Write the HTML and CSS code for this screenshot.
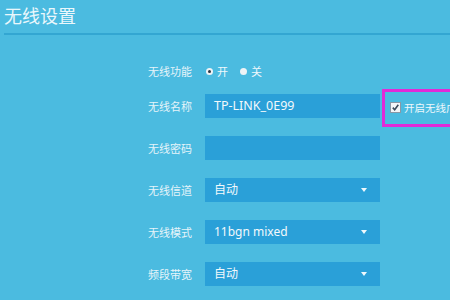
FILE: index.html
```html
<!DOCTYPE html>
<html lang="zh-CN">
<head>
  <meta charset="UTF-8">
  <title>无线设置</title>
  <link rel="stylesheet" href="styles.css">
</head>
<body>
  <div class="page">
    <h1 class="title">无线设置</h1>

    <div class="form">
      <div class="row row-radio">
        <span class="label">无线功能</span>
        <div class="radios">
          <span class="radio on"></span><span class="radio-text">开</span>
          <span class="radio"></span><span class="radio-text">关</span>
        </div>
      </div>

      <div class="row">
        <span class="label">无线名称</span>
        <div class="field">TP-LINK_0E99</div>
        <div class="highlight">
          <span class="checkbox">
            <svg width="9" height="9" viewBox="0 0 9 9"><path d="M1.8 4.6 L3.7 6.7 L7.3 1.8" fill="none" stroke="#3a4a5a" stroke-width="1.6"/></svg>
          </span>
          <span class="check-text">开启无线广播</span>
        </div>
      </div>

      <div class="row">
        <span class="label">无线密码</span>
        <div class="field"></div>
      </div>

      <div class="row">
        <span class="label">无线信道</span>
        <div class="field select">自动<span class="arrow"></span></div>
      </div>

      <div class="row">
        <span class="label">无线模式</span>
        <div class="field select">11bgn mixed<span class="arrow"></span></div>
      </div>

      <div class="row">
        <span class="label">频段带宽</span>
        <div class="field select">自动<span class="arrow"></span></div>
      </div>
    </div>
  </div>
</body>
</html>
```

FILE: styles.css
```css
body {
  margin: 0;
  background-color: #4bbbe0;
  font-family: "Noto Sans", "Noto Sans CJK SC", sans-serif;
  overflow: hidden;
}

.page {
  width: 450px;
  height: 300px;
  overflow: hidden;
}

.title {
  margin: 0 0 0 4px;
  padding-top: 5px;
  height: 35px;
  box-sizing: border-box;
  border-bottom: 2px solid #33a6d2;
  font-size: 18px;
  font-weight: normal;
  line-height: 22px;
  color: #eaf7fc;
}

.form {
  padding-top: 24px;
}

.row {
  display: flex;
  align-items: center;
  height: 24px;
  margin-bottom: 18px;
}

.row-radio {
  margin-bottom: 11px;
}

.label {
  flex-shrink: 0;
  width: 205px;
  padding-right: 13px;
  box-sizing: border-box;
  text-align: right;
  font-size: 11px;
  color: #e6f4fa;
}

.radios {
  display: flex;
  align-items: center;
  font-size: 11px;
  color: #eef8fc;
}

.radio {
  width: 7px;
  height: 7px;
  border-radius: 50%;
  background-color: #eef3f6;
  margin-left: 1px;
  margin-right: 4px;
  position: relative;
}

.radio.on::after {
  content: "";
  position: absolute;
  left: 2px;
  top: 2px;
  width: 3px;
  height: 3px;
  border-radius: 50%;
  background-color: #2b3440;
}

.radio-text {
  margin-right: 11px;
}

.field {
  flex-shrink: 0;
  width: 175px;
  height: 24px;
  box-sizing: border-box;
  background-color: #2aa0d8;
  color: #f2f9fc;
  font-size: 12.5px;
  line-height: 24px;
  padding-left: 9px;
  position: relative;
}

.select {
  font-size: 12px;
}

.arrow {
  position: absolute;
  right: 13px;
  top: 10px;
  width: 0;
  height: 0;
  border-left: 3.5px solid transparent;
  border-right: 3.5px solid transparent;
  border-top: 4px solid #eef8fc;
}

.highlight {
  display: flex;
  align-items: center;
  margin-left: 2px;
  margin-top: 3px;
  height: 38px;
  box-sizing: border-box;
  border: 3px solid #e22ad8;
  border-right: none;
  padding-left: 5px;
  padding-right: 10px;
  white-space: nowrap;
  flex-shrink: 0;
}

.checkbox {
  flex-shrink: 0;
  width: 9px;
  height: 9px;
  background-color: #f4f6f8;
  border: 1px solid #8a98a6;
  display: flex;
  margin-right: 3px;
}

.check-text {
  font-size: 10.5px;
  color: #eef8fc;
}
```
